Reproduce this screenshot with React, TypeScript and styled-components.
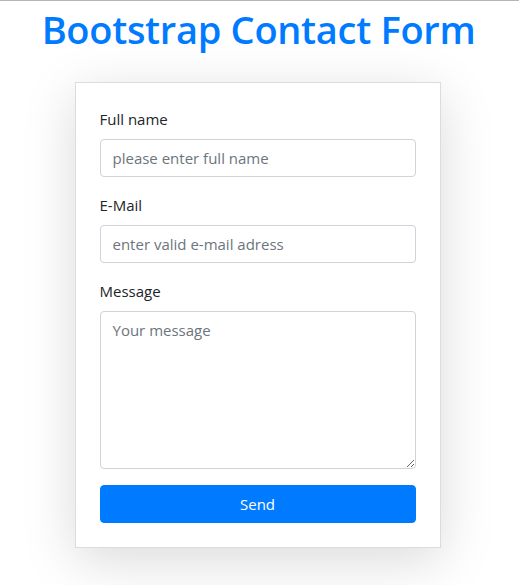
import React from "react";
import styled, { createGlobalStyle } from "styled-components";

const Global = createGlobalStyle`
  html, body { margin: 0; padding: 0; background: #fff; }
  body {
    font-family: "Open Sans", "Noto Sans", "Liberation Sans", sans-serif;
    color: #212529;
    border-top: 1px solid #b5b5b5;
  }
  * { box-sizing: border-box; }
`;

const Page = styled.div`
  display: flex;
  flex-direction: column;
  align-items: center;
  width: 519px;
  padding-bottom: 37px;
`;

const Title = styled.h1`
  margin: 4px 0 0 -2px;
  font-size: 38px;
  font-weight: 600;
  line-height: 48px;
  color: #007bff;
  letter-spacing: -0.3px;
`;

const Card = styled.form`
  margin-top: 29px;
  margin-left: -4px;
  width: 366px;
  padding: 24px;
  background: #fff;
  border: 1px solid #dcdcdc;
  box-shadow: 0 12px 50px rgba(0, 0, 0, 0.15);
  display: flex;
  flex-direction: column;
`;

const Group = styled.div`
  display: flex;
  flex-direction: column;
  margin-bottom: 16px;
`;

const Label = styled.label`
  font-size: 15px;
  line-height: 24px;
  margin-bottom: 8px;
  color: #212529;
`;

const fieldCss = `
  width: 100%;
  font-family: "Open Sans", "Noto Sans", "Liberation Sans", sans-serif;
  font-size: 15px;
  color: #495057;
  border: 1px solid #ced4da;
  border-radius: 4px;
  padding: 6px 12px;
  background: #fff;
  outline: none;
  &::placeholder { color: #6c757d; opacity: 1; }
`;

const Input = styled.input`
  ${fieldCss}
  height: 38px;
`;

const TextArea = styled.textarea`
  ${fieldCss}
  height: 158px;
  display: block;
  resize: vertical;
  line-height: 24px;
`;

const Button = styled.button`
  height: 38px;
  width: 100%;
  background: #007bff;
  color: #fff;
  border: 1px solid #007bff;
  border-radius: 4px;
  font-family: "Open Sans", "Noto Sans", "Liberation Sans", sans-serif;
  font-size: 15px;
  cursor: pointer;
`;

export default function App() {
  return (
    <>
      <Global />
      <Page>
        <Title>Bootstrap Contact Form</Title>
        <Card onSubmit={(e) => e.preventDefault()}>
          <Group>
            <Label htmlFor="name">Full name</Label>
            <Input id="name" placeholder="please enter full name" />
          </Group>
          <Group>
            <Label htmlFor="email">E-Mail</Label>
            <Input id="email" placeholder="enter valid e-mail adress" />
          </Group>
          <Group>
            <Label htmlFor="msg">Message</Label>
            <TextArea id="msg" placeholder="Your message" />
          </Group>
          <Button type="submit">Send</Button>
        </Card>
      </Page>
    </>
  );
}
